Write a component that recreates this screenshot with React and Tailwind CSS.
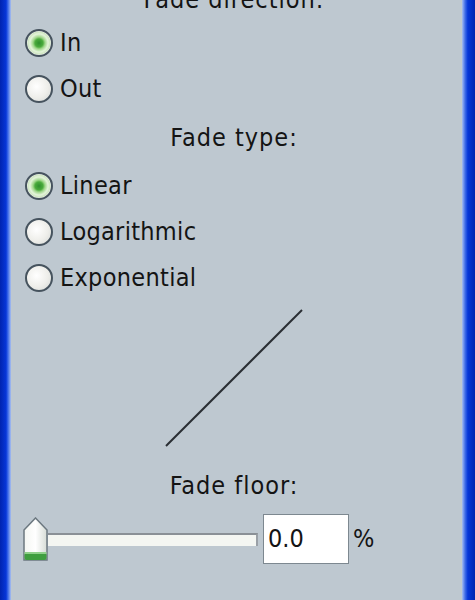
import React from 'react';

const font = "font-['DejaVu_Sans_Condensed','DejaVu_Sans',sans-serif]";

const Radio = ({ checked, label }) => (
  <label className="flex items-center h-[46px] gap-[7px] pl-[14px]">
    {checked ? (
      <span className="w-[28px] h-[28px] rounded-full border-2 border-[#46535e] bg-[radial-gradient(circle,#2e8f2e_0px,#4aab3c_4px,#9fd68a_6px,#e4f4da_9px,#cfe6c2_11px,#eef2ee_12px)]" />
    ) : (
      <span className="w-[28px] h-[28px] rounded-full border-2 border-[#46535e] bg-[radial-gradient(circle_at_40%_40%,#ffffff,#eeeeea_55%,#d2d6d4)]" />
    )}
    <span className="text-[25px] leading-[30px] text-[#141414] tracking-[0.3px]">{label}</span>
  </label>
);

const Heading = ({ children, className }) => (
  <div className={`text-center text-[25px] leading-[30px] tracking-[1px] text-[#141414] ${className}`}>{children}</div>
);

export default function App() {
  return (
    <div className={`w-[475px] h-[600px] overflow-hidden flex ${font}`}>
      {/* left frame */}
      <div className="w-[11px] bg-[linear-gradient(to_right,#0024b0,#0636d8_55%,#3d6ae8_72%,#a9c0f0)]" />

      <div className="flex-1 bg-[#bec8d0] flex flex-col pr-[5px]">
        <Heading className="-mt-[15px]">Fade direction:</Heading>

        <div className="mt-[5px]">
          <Radio checked label="In" />
          <Radio label="Out" />
        </div>

        <Heading className="mt-[11px]">Fade type:</Heading>

        <div className="mt-[10px]">
          <Radio checked label="Linear" />
          <Radio label="Logarithmic" />
          <Radio label="Exponential" />
        </div>

        {/* fade curve preview */}
        <div className="mt-[8px] flex justify-center">
          <svg width="138" height="138" viewBox="0 0 138 138">
            <line x1="1" y1="137" x2="137" y2="1" stroke="#2a2e33" strokeWidth="2" />
          </svg>
        </div>

        <Heading className="mt-[24px]">Fade floor:</Heading>

        {/* slider + value */}
        <div className="mt-[13px] flex items-center h-[50px] pl-[12px]">
          <div className="flex items-center w-[235px]">
            <svg width="25" height="45" viewBox="0 0 25 45" className="shrink-0">
              <defs>
                <linearGradient id="thumb" x1="0" y1="0" x2="1" y2="0">
                  <stop offset="0" stopColor="#f4f6f2" />
                  <stop offset="0.5" stopColor="#ffffff" />
                  <stop offset="1" stopColor="#d6dcd6" />
                </linearGradient>
              </defs>
              <path d="M1 13 L12.5 1 L24 13 L24 43 L1 43 Z" fill="url(#thumb)" stroke="#6c7880" strokeWidth="1.5" />
              <rect x="1.5" y="36" width="22" height="7" rx="2" fill="#3f9e3f" />
              <rect x="1.5" y="35" width="22" height="2" fill="#8fd08a" />
            </svg>
            <div className="flex-1 h-[13px] border-t-2 border-[#8a9096] bg-[#f4f6f2] border-r-2 border-r-[#9aa0a6]" />
          </div>
          <div className="ml-[5px] w-[86px] h-[50px] bg-white border border-[#7d8890] flex items-center pl-[4px] text-[25px] text-[#141414]">
            0.0
          </div>
          <span className="ml-[4px] text-[25px] text-[#141414]">%</span>
        </div>
      </div>

      {/* right frame */}
      <div className="w-[13px] bg-[linear-gradient(to_left,#0024b0,#0636d8_55%,#3d6ae8_75%,#a9c0f0)]" />
    </div>
  );
}
